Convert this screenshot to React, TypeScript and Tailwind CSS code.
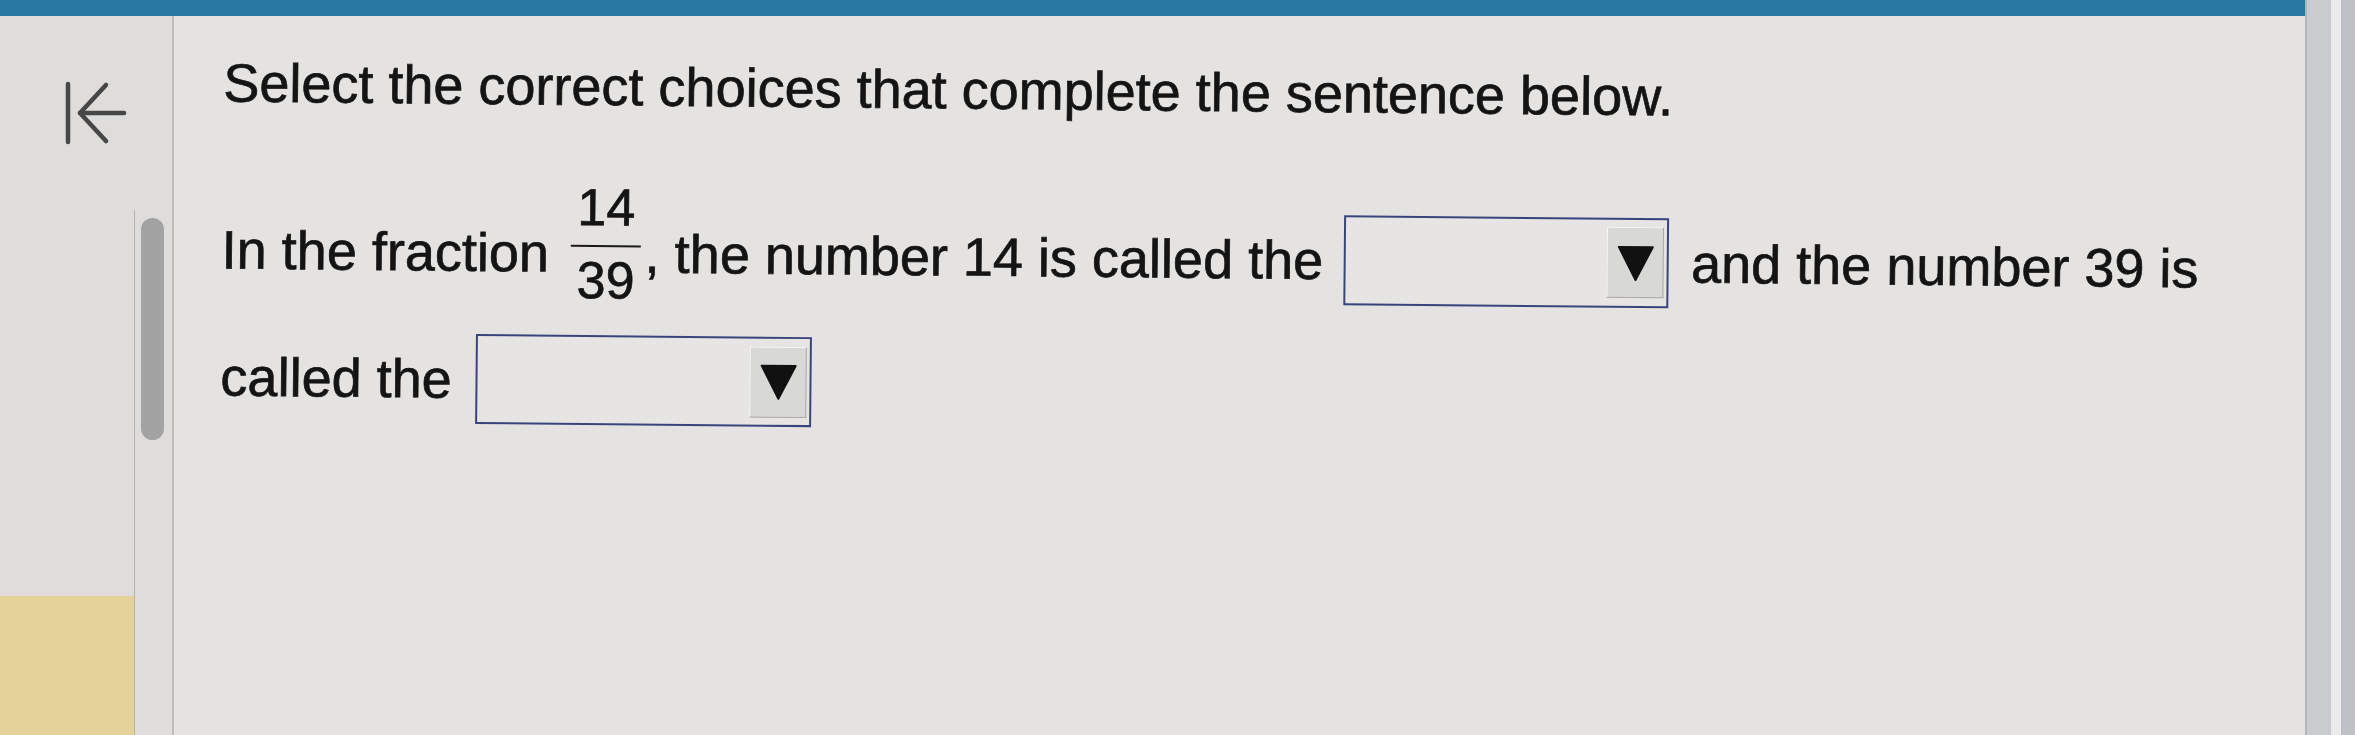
import React from 'react';

const font = "font-['Liberation_Sans',Arial,Helvetica,sans-serif]";

const Caret: React.FC = () => (
  <span className="flex h-[71px] w-[57px] items-center justify-center border border-t-[#f5f5f4] border-l-[#f5f5f4] border-r-[#a8a8a8] border-b-[#a8a8a8] bg-[#d8d8d6]">
    <svg width="38" height="38" viewBox="0 0 38 38">
      <path d="M2 3 L36 3 L19 36 Z" fill="#111" stroke="#111" strokeWidth="2" strokeLinejoin="round" />
    </svg>
  </span>
);

const Dropdown: React.FC<{ className: string }> = ({ className }) => (
  <span className={`flex h-[90px] shrink-0 items-center justify-end border-2 border-[#3a447c] bg-[#e6e5e3] pr-[3px] ${className}`}>
    <Caret />
  </span>
);

const Fraction: React.FC<{ top: string; bottom: string }> = ({ top, bottom }) => (
  <span className="ml-[22px] flex flex-col items-stretch pb-[18px] text-[52px] leading-[52px]">
    <span className="mb-[12px] px-[6px] text-center">{top}</span>
    <span className="h-[2px] bg-[#1a1a1a]" />
    <span className="mt-[7px] px-[6px] text-center">{bottom}</span>
  </span>
);

export default function App() {
  return (
    <div className={`flex h-[735px] w-[2355px] overflow-hidden bg-[#c2c3c5] text-[#141414] ${font}`}>
      <div className="flex w-[2305px] shrink-0 flex-col">
        <div className="h-[16px] bg-[#2877a0]" />
        <div className="flex flex-1">
          {/* left rail */}
          <aside className="flex w-[172px] shrink-0 flex-col bg-[#dedddb]">
            <div className="h-[194px] pl-[62px] pt-[64px]">
              <svg width="72" height="66" viewBox="0 0 72 66" fill="none" stroke="#474747" strokeWidth="4.5" strokeLinecap="round" strokeLinejoin="round">
                <path d="M6 4 L6 62" />
                <path d="M18 33 L62 33" />
                <path d="M44 5 L18 33 L44 61" />
              </svg>
            </div>
            <div className="flex flex-1">
              <div className="flex w-[134px] flex-col justify-end">
                <div className="h-[139px] bg-[#e4d398]" />
              </div>
              <div className="flex-1 border-l border-[#b3b3b3] pl-[6px] pt-[8px]">
                <div className="h-[222px] w-[23px] rounded-full bg-[#a3a3a3]" />
              </div>
            </div>
          </aside>

          {/* question */}
          <main className="flex-1 overflow-hidden border-l-2 border-[#bdbdbd] bg-[#e4e3e1]">
            <div className="origin-top-left rotate-[0.55deg] pl-[50px] pt-[39px] [-webkit-text-stroke:0.7px_#141414]">
              <h1 className="text-[54px] leading-[54px] font-normal">
                Select the correct choices that complete the sentence below.
              </h1>

              <div className="mt-[68px] flex h-[143px] items-center whitespace-pre text-[54px] leading-[54px]">
                <span>In the fraction</span>
                <Fraction top="14" bottom="39" />
                <span className="ml-[4px]">, the number 14 is called the</span>
                <Dropdown className="ml-[21px] w-[325px]" />
                <span className="ml-[22px]">and the number 39 is</span>
              </div>

              <div className="mt-[10px] flex h-[92px] items-center whitespace-pre text-[54px] leading-[54px]">
                <span>called the</span>
                <Dropdown className="ml-[24px] w-[336px]" />
              </div>
            </div>
          </main>
        </div>
      </div>

      {/* monitor edge */}
      <div className="w-[2px] bg-[#b3b4b6]" />
      <div className="w-[24px] bg-[#c9cbcf]" />
      <div className="w-[10px] bg-[#ececec]" />
      <div className="flex-1 bg-[#bfc0c3]" />
    </div>
  );
}
